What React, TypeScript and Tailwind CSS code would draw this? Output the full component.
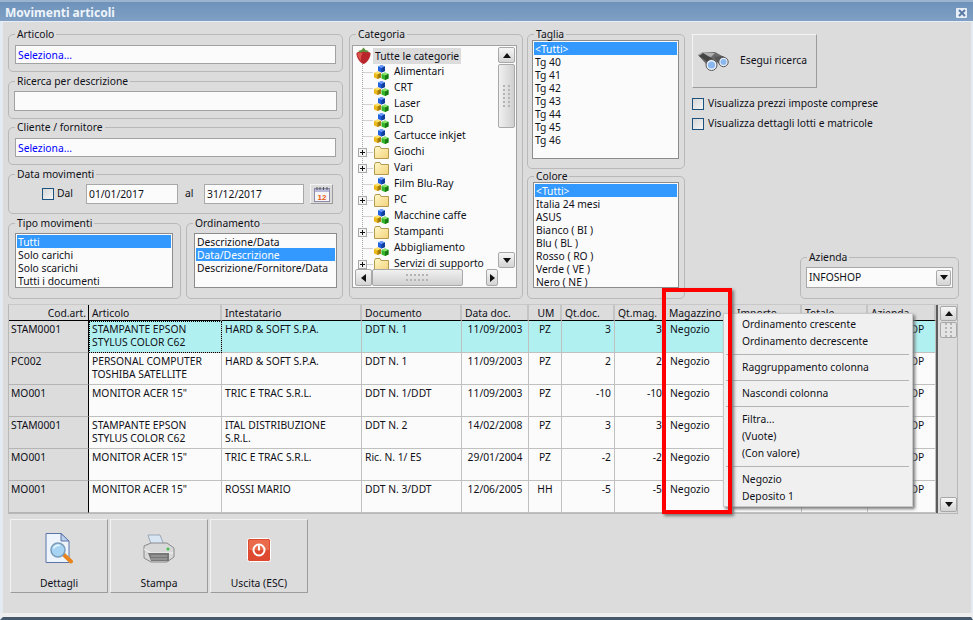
import React from "react";

const cubes = (
  <svg width="15" height="15" viewBox="0 0 15 15">
    <path d="M4 1.5 7.5 0 11 1.5V6L7.5 7.5 4 6Z" fill="#1f5fe0" />
    <path d="M4 1.5 7.5 3 11 1.5 7.5 0Z" fill="#6f9dff" />
    <path d="M7.5 3V7.5L11 6V1.5Z" fill="#123c9c" />
    <path d="M0 8 3.5 6.5 7 8V12.5L3.5 14 0 12.5Z" fill="#e8b81c" />
    <path d="M0 8 3.5 9.5 7 8 3.5 6.5Z" fill="#ffe26a" />
    <path d="M3.5 9.5V14L7 12.5V8Z" fill="#a57c0c" />
    <path d="M7.5 9 11 7.5 14.5 9V13.5L11 15 7.5 13.5Z" fill="#35b52a" />
    <path d="M7.5 9 11 10.5 14.5 9 11 7.5Z" fill="#8ae66f" />
    <path d="M11 10.5V15L14.5 13.5V9Z" fill="#1c7a16" />
  </svg>
);

const folder = (
  <svg width="15" height="13" viewBox="0 0 15 13">
    <defs>
      <linearGradient id="fg" x1="0" y1="0" x2="1" y2="1">
        <stop offset="0" stopColor="#fff8c8" />
        <stop offset="1" stopColor="#f2d27c" />
      </linearGradient>
    </defs>
    <path d="M.5 2.5 1.5 .5H6L7 2.5H14.5V12.5H.5Z" fill="url(#fg)" stroke="#b49a50" />
  </svg>
);

const strawberry = (
  <svg width="15" height="17" viewBox="0 0 15 17">
    <path d="M.5 6C3 3.5 12 3.5 14.5 6 15 10 11 16 7.5 17 4 16 0 10 .5 6Z" fill="#b8262c" />
    <path d="M1.5 6.5C4 5 6 5 6.5 6.5 5 9 4.5 11 5 14 3 11.5 1 9 1.5 6.5Z" fill="#d9554c" />
    <path d="M2 4 5.5 3 7.5 .5 9.5 3 13 4 10.5 5.5 7.5 4.5 4.5 5.5Z" fill="#5c8f3a" />
  </svg>
);

const tri = {
  up: "M1 6 5 1 9 6Z",
  down: "M1 1 5 6 9 1Z",
  left: "M6 1 1 5 6 9Z",
  right: "M1 1 6 5 1 9Z",
};

function ArrowBtn({ dir, className }: { dir: "up" | "down" | "left" | "right"; className: string }) {
  const horiz = dir === "left" || dir === "right";
  return (
    <div className={"flex items-center justify-center rounded-[2px] border border-[#a8a8a8] bg-gradient-to-b from-[#f6f6f6] to-[#d4d4d4] " + className}>
      <svg width={horiz ? 7 : 10} height={horiz ? 10 : 7} viewBox={horiz ? "0 0 7 10" : "0 0 10 7"}>
        <path d={tri[dir]} fill="#111" />
      </svg>
    </div>
  );
}

const grip = (
  <svg width="8" height="23" viewBox="0 0 8 23">
    {[0, 4, 8, 12, 16, 20].map((y) => (
      <g key={y} fill="#b4b4b4">
        <rect x="0" y={y} width="2" height="2" />
        <rect x="5" y={y} width="2" height="2" />
      </g>
    ))}
  </svg>
);

const gripH = (
  <svg width="23" height="8" viewBox="0 0 23 8">
    {[0, 4, 8, 12, 16, 20].map((x) => (
      <g key={x} fill="#b4b4b4">
        <rect x={x} y="0" width="2" height="2" />
        <rect x={x} y="5" width="2" height="2" />
      </g>
    ))}
  </svg>
);

function Group({ title, className, inner, children }: { title: string; className: string; inner?: string; children?: React.ReactNode }) {
  return (
    <fieldset className={"min-w-0 rounded-[5px] border border-[#b8b8b8] " + className}>
      <legend className="ml-[6px] px-[2px] leading-[14px]">{title}</legend>
      <div className={inner}>{children}</div>
    </fieldset>
  );
}

function TextBox({ text, className }: { text?: string; className: string }) {
  return (
    <div className={"border border-[#a2a2a2] bg-[#fbfbfb] pl-[2px] leading-[19px] text-[#0000ff] " + className}>{text}</div>
  );
}

function ListBox({ items, sel, className }: { items: string[]; sel: number; className: string }) {
  return (
    <div className={"border border-[#8c8c8c] bg-[#fbfbfb] p-[1px] " + className}>
      {items.map((t, i) => (
        <div key={t} className={"h-[13px] pl-[1px] leading-[15px] whitespace-nowrap " + (i === sel ? "bg-[#3399ff] text-white" : "")}>
          {t}
        </div>
      ))}
    </div>
  );
}

function Check() {
  return <div className="h-[12px] w-[12px] shrink-0 border border-[#1c5180] bg-gradient-to-br from-[#d8d8d8] to-[#f4f4f4]" />;
}

const tree: [string, "cube" | "folder"][] = [
  ["Alimentari", "cube"],
  ["CRT", "cube"],
  ["Laser", "cube"],
  ["LCD", "cube"],
  ["Cartucce inkjet", "cube"],
  ["Giochi", "folder"],
  ["Vari", "folder"],
  ["Film Blu-Ray", "cube"],
  ["PC", "folder"],
  ["Macchine caffe", "cube"],
  ["Stampanti", "folder"],
  ["Abbigliamento", "cube"],
  ["Servizi di supporto", "folder"],
];

function Connector({ plus }: { plus: boolean }) {
  return (
    <svg width="21" height="16" viewBox="0 0 21 16" className="shrink-0">
      <path d="M9.5 0V16M9.5 8.5H20" stroke="#a8a8a8" strokeDasharray="1 1" />
      {plus && (
        <g>
          <rect x="5.5" y="4.5" width="8" height="8" fill="#f4f4f4" stroke="#a8a8a8" />
          <path d="M7 8.5H12M9.5 6V11" stroke="#111" />
        </g>
      )}
    </svg>
  );
}

function CategoryTree() {
  return (
    <div className="mt-[4px] ml-[2px] flex h-[243px] w-[165px] flex-col border border-[#a2a2a2] bg-[#fbfbfb]">
      <div className="flex min-h-0 flex-1">
        <div className="min-w-0 flex-1 overflow-hidden pt-[1px]">
          <div className="flex h-[17px] items-center pl-[3px]">
            <span className="w-[17px] shrink-0">{strawberry}</span>
            <span className="bg-[#dcdcdc] px-[2px] leading-[16px]">Tutte le categorie</span>
          </div>
          {tree.map(([t, k]) => (
            <div key={t} className="flex h-[16px] items-center whitespace-nowrap">
              <Connector plus={k === "folder"} />
              <span className="flex w-[20px] shrink-0 justify-start">{k === "cube" ? cubes : folder}</span>
              <span>{t}</span>
            </div>
          ))}
        </div>
        <div className="flex w-[18px] shrink-0 flex-col py-[1px]">
          <ArrowBtn dir="up" className="h-[16px] w-[17px]" />
          <div className="mt-[1px] flex h-[64px] w-[17px] items-center justify-center rounded-[2px] border border-[#a8a8a8] bg-gradient-to-r from-[#f0f0f0] to-[#d0d0d0]">{grip}</div>
          <div className="flex-1" />
          <ArrowBtn dir="down" className="h-[16px] w-[17px]" />
        </div>
      </div>
      <div className="flex h-[18px] shrink-0 pl-[2px]">
        <ArrowBtn dir="left" className="h-[17px] w-[17px]" />
        <div className="flex h-[17px] w-[91px] items-center justify-center rounded-[2px] border border-[#a8a8a8] bg-gradient-to-b from-[#f0f0f0] to-[#d0d0d0]">{gripH}</div>
        <div className="w-[23px]" />
        <ArrowBtn dir="right" className="h-[17px] w-[12px]" />
      </div>
    </div>
  );
}

const binoculars = (
  <svg width="32" height="20" viewBox="0 0 32 20">
    <path d="M1 4 6 1 18 1 27 6 20 12 10 14Z" fill="#6a6a6a" />
    <path d="M1 4 6 1 18 2 14 6Z" fill="#b0b0b0" />
    <path d="M2 5 12 12 16 8 6 2Z" fill="#444" />
    <path d="M17 6 26 5 30 9 22 13Z" fill="#555" />
    <circle cx="14.5" cy="14" r="5.5" fill="#e8f0fa" stroke="#555" />
    <circle cx="14.5" cy="14" r="3.6" fill="#8ab8ee" />
    <circle cx="26.5" cy="11" r="4.7" fill="#e8f0fa" stroke="#555" />
    <circle cx="26.5" cy="11" r="3" fill="#8ab8ee" />
  </svg>
);

const calendar = (
  <svg width="16" height="15" viewBox="0 0 16 15">
    <rect x=".5" y="1.5" width="15" height="13" fill="#f6f6fb" stroke="#8c8ca8" />
    <rect x="1" y="2" width="14" height="3" fill="#b8b8d8" />
    <path d="M3 0V3M6 0V3M9.5 0V3M13 0V3" stroke="#555" />
    <text x="8" y="12.5" textAnchor="middle" fontSize="8" fontWeight="700" fill="#e85a10" fontFamily="Liberation Sans, sans-serif">12</text>
  </svg>
);

const docSearch = (
  <svg width="28" height="32" viewBox="0 0 28 32">
    <path d="M1 .5H16L24 8V29.5H1Z" fill="#eef4fc" stroke="#5a74a8" />
    <path d="M16 .5V8H24Z" fill="#bcd0ec" stroke="#5a74a8" />
    <path d="M18 21 26 28.5" stroke="#e88420" strokeWidth="4" strokeLinecap="round" />
    <circle cx="13" cy="17" r="7" fill="#a8d4f4" stroke="#7a9cb8" strokeWidth="1.5" />
    <path d="M8.5 15.5C10 12.5 13 12 15 12.5" stroke="#eaf6ff" strokeWidth="1.5" fill="none" />
  </svg>
);

const printer = (
  <svg width="32" height="31" viewBox="0 0 32 31">
    <path d="M5 1 17 1 21 11 9 13Z" fill="#d8e6f4" stroke="#9aa8b8" />
    <path d="M1 12 8 9 24 9 31 14V23L24 28H8L1 24Z" fill="#d8d8d8" stroke="#8a8a8a" />
    <path d="M1 15 8 19H30" stroke="#f4f4f4" fill="none" />
    <path d="M5 19H26V27H8Z" fill="#777" />
    <path d="M8 22H24M8 25H24" stroke="#b0b0b0" />
    <circle cx="25" cy="15" r="1.5" fill="#3fbf4a" />
  </svg>
);

const power = (
  <div className="mb-[3px]">
    <svg width="24" height="24" viewBox="0 0 24 24" className="block">
      <rect x=".5" y=".5" width="23" height="23" rx="2" fill="#de4a30" stroke="#fff" />
      <rect x="2" y="2" width="20" height="10" fill="#ea6a4c" />
      <circle cx="12" cy="12" r="5.5" fill="none" stroke="#fff" strokeWidth="2" />
      <path d="M12 7.5V12.5" stroke="#fff" strokeWidth="2" />
    </svg>
  </div>
);

type Row = [string, string, string, string, string, string, string, string, string];
const rows: Row[] = [
  ["STAM0001", "STAMPANTE EPSON\nSTYLUS COLOR C62", "HARD & SOFT S.P.A.", "DDT N. 1", "11/09/2003", "PZ", "3", "3", "Negozio"],
  ["PC002", "PERSONAL COMPUTER\nTOSHIBA SATELLITE", "HARD & SOFT S.P.A.", "DDT N. 1", "11/09/2003", "PZ", "2", "2", "Negozio"],
  ["MO001", 'MONITOR ACER 15"', "TRIC E TRAC S.R.L.", "DDT N. 1/DDT", "11/09/2003", "PZ", "-10", "-10", "Negozio"],
  ["STAM0001", "STAMPANTE EPSON\nSTYLUS COLOR C62", "ITAL DISTRIBUZIONE\nS.R.L.", "DDT N. 2", "14/02/2008", "PZ", "3", "3", "Negozio"],
  ["MO001", 'MONITOR ACER 15"', "TRIC E TRAC S.R.L.", "Ric. N. 1/ ES", "29/01/2004", "PZ", "-2", "-2", "Negozio"],
  ["MO001", 'MONITOR ACER 15"', "ROSSI MARIO", "DDT N. 3/DDT", "12/06/2005", "HH", "-5", "-5", "Negozio"],
];

const heads = ["Articolo", "Intestatario", "Documento", "Data doc.", "UM", "Qt.doc.", "Qt.mag.", "Magazzino", "Importo", "Totale", "Azienda"];

function Grid() {
  return (
    <div className="ml-[8px] mt-[5px] flex h-[210px] w-[950px] border border-[#b8b8b8] border-t-[#c8c8c8] bg-[#dcdcdc]">
      <div className="grid h-[208px] w-[927px] shrink-0 grid-cols-[80px_133px_140px_100px_67px_33px_53px_51px_68px_68px_66px_68px] grid-rows-[16px_repeat(6,32px)] overflow-hidden">
        <div className="border-r border-[#000] border-b border-b-[#000] pr-[2px] text-right leading-[16px]">Cod.art.</div>
        {heads.map((h, i) => (
          <div key={h} className={"border-r-2 border-b border-r-[#c4c4c4] border-b-[#000] pl-[3px] leading-[16px] " + (i === 4 ? "text-center" : "")}>
            {h}
          </div>
        ))}
        {rows.map((r, ri) => {
          const bg = ri === 0 ? "bg-[#b0f0f0]" : "bg-[#fbfbfb]";
          return (
            <React.Fragment key={ri}>
              <div className="border-r border-b border-r-[#000] border-b-[#b4b4b4] bg-[#dcdcdc] pl-[2px] pt-[2px] leading-[13px]">{r[0]}</div>
              {r.slice(1, 3).map((c, ci) => (
                <div key={ci} className={"whitespace-pre-line border-r border-b border-[#c0c0c0] pl-[3px] pt-[2px] leading-[13px] " + bg + (ri === 0 && ci === 0 ? " outline-1 -outline-offset-1 outline-dotted outline-[#000]" : "")}>
                  {c}
                </div>
              ))}
              <div className={"border-r border-b border-[#c0c0c0] pl-[3px] pt-[2px] leading-[13px] " + bg}>{r[3]}</div>
              <div className={"border-r border-b border-[#c0c0c0] pt-[2px] text-center leading-[13px] " + bg}>{r[4]}</div>
              <div className={"border-r border-b border-[#c0c0c0] pt-[2px] text-center leading-[13px] " + bg}>{r[5]}</div>
              <div className={"border-r border-b border-[#c0c0c0] pr-[3px] pt-[2px] text-right leading-[13px] " + bg}>{r[6]}</div>
              <div className={"border-r border-b border-[#c0c0c0] pr-[3px] pt-[2px] text-right leading-[13px] " + bg}>{r[7]}</div>
              <div className={"border-r border-b border-[#c0c0c0] pl-[4px] pt-[2px] leading-[13px] " + bg}>{r[8]}</div>
              <div className={"border-r border-b border-[#c0c0c0] " + bg} />
              <div className={"border-r border-b border-[#c0c0c0] " + bg} />
              <div className={"border-r border-b border-[#c0c0c0] pl-[4px] pt-[2px] leading-[13px] " + bg}>INFOSHOP</div>
            </React.Fragment>
          );
        })}
      </div>
      <div className="w-[2px] shrink-0 bg-[#5c5c5c]" />
      <div className="flex flex-1 flex-col items-end py-[1px]">
        <ArrowBtn dir="up" className="h-[15px] w-[17px]" />
        <div className="mt-[1px] flex h-[16px] w-[17px] items-center justify-center overflow-hidden rounded-[2px] border border-[#a8a8a8] bg-[#e4e4e4]">{grip}</div>
        <div className="flex-1" />
        <ArrowBtn dir="down" className="h-[15px] w-[17px]" />
      </div>
    </div>
  );
}

function Sep() {
  return <div className="my-[4px] -ml-[16px] mr-[3px] h-[1px] bg-[#b4b4b4]" />;
}

function Menu() {
  const Item = ({ t }: { t: string }) => <div className="h-[17px] leading-[17px]">{t}</div>;
  return (
    <div className="absolute left-[723px] top-[313px] h-[194px] w-[190px] border border-[#c8c8c8] bg-[#f0f0f0] pl-[18px] pt-[2px] shadow-[2px_2px_3px_#777]">
      <Item t="Ordinamento crescente" />
      <Item t="Ordinamento decrescente" />
      <Sep />
      <Item t="Raggruppamento colonna" />
      <Sep />
      <Item t="Nascondi colonna" />
      <Sep />
      <Item t="Filtra..." />
      <Item t="(Vuote)" />
      <Item t="(Con valore)" />
      <Sep />
      <Item t="Negozio" />
      <Item t="Deposito 1" />
    </div>
  );
}

function BigBtn({ icon, label }: { icon: React.ReactNode; label: string }) {
  return (
    <div className="flex h-[74px] w-[98px] flex-col items-center border border-[#f2f2f2] border-r-[#9c9c9c] border-b-[#9c9c9c] bg-[#dcdcdc]">
      <div className="flex h-[46px] w-full items-end justify-center pb-[1px]">{icon}</div>
      <div className="mt-[10px] leading-[14px]">{label}</div>
    </div>
  );
}

export default function App() {
  return (
    <div className="relative h-[620px] w-[973px] overflow-hidden bg-white font-['Noto_Sans',sans-serif] text-[10.3px] text-[#101018]">
      <div className="box-border flex h-[620px] flex-col border-l-[3px] border-r-[2px] border-b-[3px] border-[#e4eaf2] border-b-[#46586c] bg-[#dcdcdc]">
        <div className="-ml-[3px] -mr-[2px] flex h-[22px] shrink-0 items-center justify-between border-b border-t-2 border-b-[#e8eef6] border-t-[#9ab4d0] bg-gradient-to-b from-[#6e92ba] to-[#7fa0c4] pl-[5px] pr-[6px] pt-[2px]">
          <span className="pt-[1px] text-[12px] font-bold leading-none text-[#eef4fa]">Movimenti articoli</span>
          <div className="flex h-[10px] w-[11px] items-center justify-center rounded-[1px] bg-[#e8eef6]">
            <svg width="8" height="8" viewBox="0 0 8 8"><path d="M1 1 7 7M7 1 1 7" stroke="#5a7ca4" strokeWidth="2" /></svg>
          </div>
        </div>
        <div className="-ml-[3px] -mr-[2px] flex flex-1 flex-col">
          <div className="ml-[8px] mt-[5px] flex h-[272px]">
            <div className="flex w-[335px] shrink-0 flex-col">
              <Group title="Articolo" className="h-[45px]" inner="px-[6px] pt-[4px]">
                <TextBox text="Seleziona..." className="h-[19px] w-[321px]" />
              </Group>
              <Group title="Ricerca per descrizione" className="mt-[2px] h-[45px]" inner="px-[5px] pt-[3px]">
                <TextBox className="h-[20px] w-[323px]" />
              </Group>
              <Group title="Cliente / fornitore" className="mt-[1px] h-[45px]" inner="px-[6px] pt-[4px]">
                <TextBox text="Seleziona..." className="h-[19px] w-[321px]" />
              </Group>
              <Group title="Data movimenti" className="mt-[2px] h-[47px]" inner="pl-[33px] pt-[3px]">
                <div className="flex h-[20px] items-center">
                  <Check />
                  <span className="ml-[3px] w-[29px]">Dal</span>
                  <div className="h-[20px] w-[92px] border border-[#a8a8a8] bg-[#fbfbfb] pl-[2px] leading-[18px]">01/01/2017</div>
                  <span className="ml-[7px] w-[19px]">al</span>
                  <div className="h-[20px] w-[100px] border border-[#a8a8a8] bg-[#fbfbfb] pl-[2px] leading-[18px]">31/12/2017</div>
                  <div className="ml-[6px] flex h-[20px] w-[23px] items-center justify-center border border-[#f4f4f4] border-r-[#9c9c9c] border-b-[#9c9c9c] bg-[#dcdcdc]">{calendar}</div>
                </div>
              </Group>
              <div className="mt-[2px] flex">
                <Group title="Tipo movimenti" className="h-[83px] w-[173px]" inner="px-[6px] pt-[3px]">
                  <ListBox items={["Tutti", "Solo carichi", "Solo scarichi", "Tutti i documenti"]} sel={0} className="h-[55px] w-[158px]" />
                </Group>
                <Group title="Ordinamento" className="ml-[5px] h-[83px] w-[157px]" inner="px-[7px] pt-[3px]">
                  <ListBox items={["Descrizione/Data", "Data/Descrizione", "Descrizione/Fornitore/Data"]} sel={1} className="h-[55px] w-[143px]" />
                </Group>
              </div>
            </div>
            <Group title="Categoria" className="ml-[6px] h-[272px] w-[174px]">
              <CategoryTree />
            </Group>
            <div className="ml-[4px] flex w-[158px] shrink-0 flex-col">
              <Group title="Taglia" className="h-[142px]" inner="px-[4px]">
                <ListBox items={["<Tutti>", "Tg 40", "Tg 41", "Tg 42", "Tg 43", "Tg 44", "Tg 45", "Tg 46"]} sel={0} className="-mt-[1px] h-[119px] w-[147px]" />
              </Group>
              <Group title="Colore" className="h-[130px]" inner="px-[5px]">
                <ListBox items={["<Tutti>", "Italia 24 mesi", "ASUS", "Bianco ( BI )", "Blu ( BL )", "Rosso ( RO )", "Verde ( VE )", "Nero ( NE )"]} sel={0} className="-mt-[1px] h-[106px] w-[146px]" />
              </Group>
            </div>
            <div className="ml-[7px] flex w-[266px] shrink-0 flex-col">
              <div className="mt-[7px] flex h-[54px] w-[125px] items-center border border-[#f4f4f4] border-r-[#9c9c9c] border-b-[#9c9c9c] bg-[#dcdcdc] pl-[4px]">
                {binoculars}
                <span className="ml-[11px]">Esegui ricerca</span>
              </div>
              <div className="mt-[9px] flex h-[13px] items-center">
                <Check />
                <span className="ml-[4px]">Visualizza prezzi imposte comprese</span>
              </div>
              <div className="mt-[7px] flex h-[13px] items-center">
                <Check />
                <span className="ml-[4px]">Visualizza dettagli lotti e matricole</span>
              </div>
              <Group title="Azienda" className="ml-[108px] mt-auto h-[49px] w-[159px]" inner="px-[5px] pt-[3px]">
                <div className="flex h-[21px] w-[147px] items-center justify-between border border-[#a8a8a8] bg-[#fbfbfb] pl-[2px] pr-[1px]">
                  <span>INFOSHOP</span>
                  <ArrowBtn dir="down" className="h-[16px] w-[15px]" />
                </div>
              </Group>
            </div>
          </div>
          <Grid />
          <div className="ml-[10px] mt-[5px] flex gap-[2px]">
            <BigBtn icon={docSearch} label="Dettagli" />
            <BigBtn icon={printer} label="Stampa" />
            <BigBtn icon={power} label="Uscita (ESC)" />
          </div>
          <div className="mt-auto h-[4px] bg-[#eeeeee]" />
        </div>
      </div>
      <Menu />
      <div className="absolute left-[662px] top-[288px] h-[226px] w-[70px] border-4 border-[#ff0000] shadow-[2px_2px_3px_#777]" />
    </div>
  );
}
